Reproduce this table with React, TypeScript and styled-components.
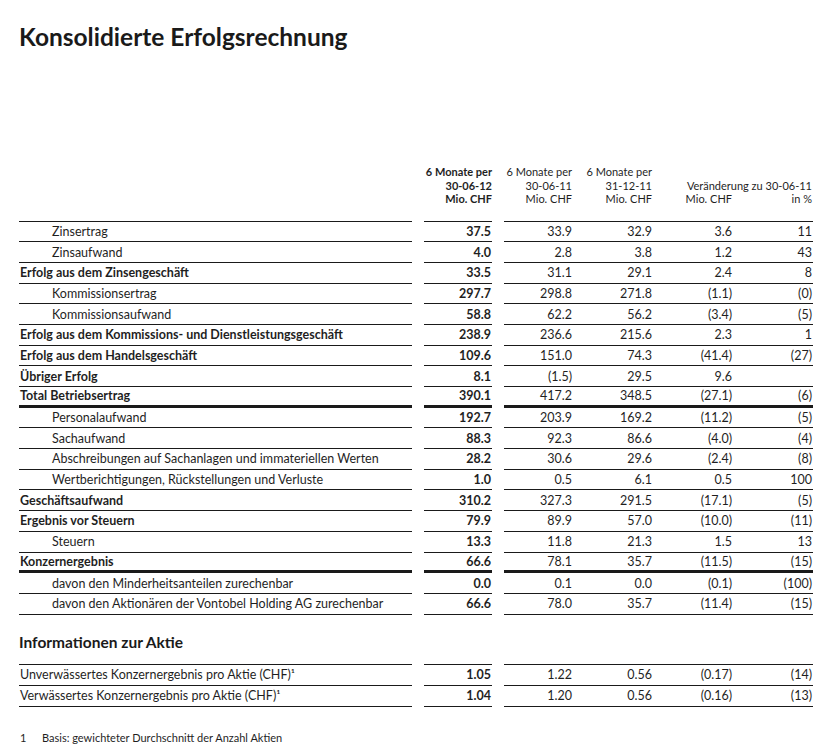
import React from "react";
import styled, { createGlobalStyle } from "styled-components";

const Global = createGlobalStyle`
  html, body { margin: 0; padding: 0; background: #ffffff; }
  body { font-family: Lato, "Open Sans", sans-serif; color: #1f1f1f; }
`;

const Page = styled.div`
  width: 834px;
  height: 754px;
  padding: 22px 0 0 19px;
  box-sizing: border-box;
  overflow: hidden;
`;

const Title = styled.h1`
  margin: 0;
  font-size: 24.5px;
  line-height: 30px;
  font-weight: 700;
  color: #1a1a1a;
`;

const Header = styled.div`
  display: flex;
  align-items: flex-end;
  margin-top: 113px;
  font-size: 11px;
  line-height: 13.5px;
  height: 40.5px;
`;

const HeadSpacer = styled.div`
  width: 393px;
`;

const HeadCol = styled.div<{ $w: number; $bold?: boolean; $ml?: number }>`
  width: ${(p) => p.$w}px;
  margin-left: ${(p) => p.$ml ?? 0}px;
  text-align: right;
  font-weight: ${(p) => (p.$bold ? 700 : 400)};
  white-space: nowrap;
`;

const HeadChange = styled.div`
  width: 161px;
  display: grid;
  grid-template-columns: 80px 81px;
`;

const HeadChangeTitle = styled.div`
  grid-column: 1 / span 2;
  text-align: right;
  padding-right: 1px;
  white-space: nowrap;
`;

const HeadChangeUnit = styled.div<{ $pr?: number }>`
  text-align: right;
  padding-right: ${(p) => p.$pr ?? 0}px;
`;

const Table = styled.div<{ $mt: number }>`
  margin-top: ${(p) => p.$mt}px;
`;

const Row = styled.div<{ $h: number }>`
  display: flex;
  height: ${(p) => p.$h}px;
  font-size: 12.5px;
`;

const Seg = styled.div<{ $thick?: boolean; $top?: boolean }>`
  box-sizing: border-box;
  border-bottom: ${(p) => (p.$thick ? 3 : 1)}px solid #1a1a1a;
  border-top: ${(p) => (p.$top ? "1px solid #1a1a1a" : "0")};
  display: flex;
  align-items: center;
`;

const LabelSeg = styled(Seg)<{ $indent?: boolean; $bold?: boolean }>`
  width: 393px;
  padding-left: ${(p) => (p.$indent ? 33 : 1)}px;
  font-weight: ${(p) => (p.$bold ? 700 : 400)};
  white-space: nowrap;
`;

const MainSeg = styled(Seg)`
  width: 68px;
  margin-left: 12px;
  justify-content: flex-end;
  padding-right: 1px;
  font-weight: 700;
`;

const GroupSeg = styled(Seg)`
  width: 309px;
  margin-left: 12px;
  display: grid;
  grid-template-columns: 68px 80px 80px 81px;
  align-items: center;
`;

const Num = styled.div<{ $pr?: number }>`
  text-align: right;
  padding-right: ${(p) => p.$pr ?? 0}px;
`;

const SubTitle = styled.h2`
  margin: 17px 0 0 0;
  font-size: 15.5px;
  line-height: 20px;
  font-weight: 700;
  color: #1a1a1a;
`;

const Footnote = styled.div`
  display: flex;
  margin-top: 24px;
  font-size: 11px;
  line-height: 13px;
`;

const FootNum = styled.span`
  width: 22px;
  padding-left: 1px;
`;

type R = { label: React.ReactNode; indent?: boolean; bold?: boolean; thick?: boolean; v: string[] };

const main: R[] = [
  { label: "Zinsertrag", indent: true, v: ["37.5", "33.9", "32.9", "3.6", "11"] },
  { label: "Zinsaufwand", indent: true, v: ["4.0", "2.8", "3.8", "1.2", "43"] },
  { label: "Erfolg aus dem Zinsengeschäft", bold: true, v: ["33.5", "31.1", "29.1", "2.4", "8"] },
  { label: "Kommissionsertrag", indent: true, v: ["297.7", "298.8", "271.8", "(1.1)", "(0)"] },
  { label: "Kommissionsaufwand", indent: true, v: ["58.8", "62.2", "56.2", "(3.4)", "(5)"] },
  { label: "Erfolg aus dem Kommissions- und Dienstleistungsgeschäft", bold: true, v: ["238.9", "236.6", "215.6", "2.3", "1"] },
  { label: "Erfolg aus dem Handelsgeschäft", bold: true, v: ["109.6", "151.0", "74.3", "(41.4)", "(27)"] },
  { label: "Übriger Erfolg", bold: true, v: ["8.1", "(1.5)", "29.5", "9.6", ""] },
  { label: "Total Betriebsertrag", bold: true, thick: true, v: ["390.1", "417.2", "348.5", "(27.1)", "(6)"] },
  { label: "Personalaufwand", indent: true, v: ["192.7", "203.9", "169.2", "(11.2)", "(5)"] },
  { label: "Sachaufwand", indent: true, v: ["88.3", "92.3", "86.6", "(4.0)", "(4)"] },
  { label: "Abschreibungen auf Sachanlagen und immateriellen Werten", indent: true, v: ["28.2", "30.6", "29.6", "(2.4)", "(8)"] },
  { label: "Wertberichtigungen, Rückstellungen und Verluste", indent: true, v: ["1.0", "0.5", "6.1", "0.5", "100"] },
  { label: "Geschäftsaufwand", bold: true, v: ["310.2", "327.3", "291.5", "(17.1)", "(5)"] },
  { label: "Ergebnis vor Steuern", bold: true, v: ["79.9", "89.9", "57.0", "(10.0)", "(11)"] },
  { label: "Steuern", indent: true, v: ["13.3", "11.8", "21.3", "1.5", "13"] },
  { label: "Konzernergebnis", bold: true, thick: true, v: ["66.6", "78.1", "35.7", "(11.5)", "(15)"] },
  { label: "davon den Minderheitsanteilen zurechenbar", indent: true, v: ["0.0", "0.1", "0.0", "(0.1)", "(100)"] },
  { label: "davon den Aktionären der Vontobel Holding AG zurechenbar", indent: true, v: ["66.6", "78.0", "35.7", "(11.4)", "(15)"] },
];

const info: R[] = [
  { label: "Unverwässertes Konzernergebnis pro Aktie (CHF)¹", v: ["1.05", "1.22", "0.56", "(0.17)", "(14)"] },
  { label: "Verwässertes Konzernergebnis pro Aktie (CHF)¹", v: ["1.04", "1.20", "0.56", "(0.16)", "(13)"] },
];

function DataRows({ rows, h }: { rows: R[]; h: number }) {
  return (
    <>
      {rows.map((r, i) => (
        <Row key={i} $h={h + (i === 0 ? 1 : 0)}>
          <LabelSeg $indent={r.indent} $bold={r.bold} $thick={r.thick} $top={i === 0}>
            {r.label}
          </LabelSeg>
          <MainSeg $thick={r.thick} $top={i === 0}>{r.v[0]}</MainSeg>
          <GroupSeg $thick={r.thick} $top={i === 0}>
            <Num>{r.v[1]}</Num>
            <Num>{r.v[2]}</Num>
            <Num>{r.v[3]}</Num>
            <Num $pr={1}>{r.v[4]}</Num>
          </GroupSeg>
        </Row>
      ))}
    </>
  );
}

export default function App() {
  return (
    <Page>
      <Global />
      <Title>Konsolidierte Erfolgsrechnung</Title>
      <Header>
        <HeadSpacer />
        <HeadCol $w={68} $ml={12} $bold>
          6 Monate per
          <br />
          30-06-12
          <br />
          Mio. CHF
        </HeadCol>
        <HeadCol $w={68} $ml={12}>
          6 Monate per
          <br />
          30-06-11
          <br />
          Mio. CHF
        </HeadCol>
        <HeadCol $w={80}>
          6 Monate per
          <br />
          31-12-11
          <br />
          Mio. CHF
        </HeadCol>
        <HeadChange>
          <HeadChangeTitle>Veränderung zu 30-06-11</HeadChangeTitle>
          <HeadChangeUnit>Mio. CHF</HeadChangeUnit>
          <HeadChangeUnit $pr={1}>in %</HeadChangeUnit>
        </HeadChange>
      </Header>
      <Table $mt={15}>
        <DataRows rows={main} h={20.7} />
      </Table>
      <SubTitle>Informationen zur Aktie</SubTitle>
      <Table $mt={12}>
        <DataRows rows={info} h={21} />
      </Table>
      <Footnote>
        <FootNum>1</FootNum>
        <span>Basis: gewichteter Durchschnitt der Anzahl Aktien</span>
      </Footnote>
    </Page>
  );
}
